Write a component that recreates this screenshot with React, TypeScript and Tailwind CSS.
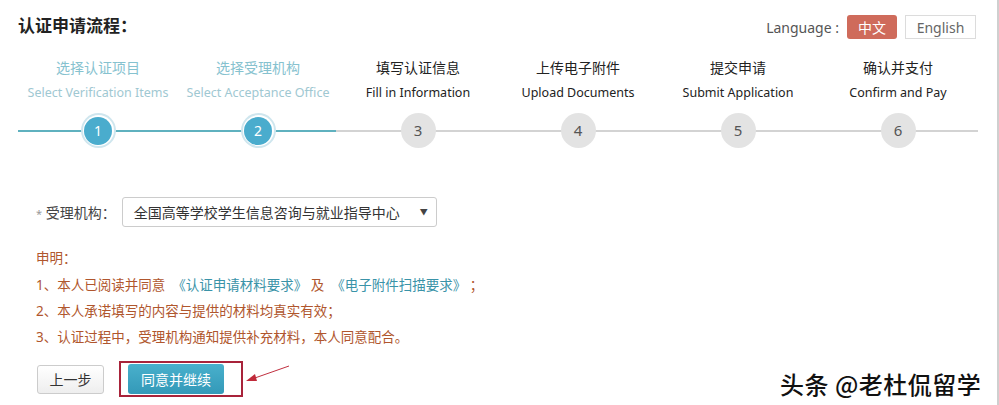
import React from "react";

const steps = [
  { cn: "选择认证项目", en: "Select Verification Items", active: true },
  { cn: "选择受理机构", en: "Select Acceptance Office", active: true },
  { cn: "填写认证信息", en: "Fill in Information", active: false },
  { cn: "上传电子附件", en: "Upload Documents", active: false },
  { cn: "提交申请", en: "Submit Application", active: false },
  { cn: "确认并支付", en: "Confirm and Pay", active: false },
];

const font = { fontFamily: '"Noto Sans", "Noto Sans CJK SC", sans-serif' };

export default function App() {
  return (
    <div className="relative w-[999px] h-[405px] overflow-hidden bg-white text-[#333] border-r-2 border-[#cfcfcf]" style={font}>
      {/* header */}
      <div className="flex items-center justify-between pl-[18px] pr-[21px] pt-[13px]">
        <div className="text-[17px] font-bold text-[#222] leading-[24px]">认证申请流程：</div>
        <div className="flex items-center pt-[2px]">
          <span className="text-[14px] text-[#555] mr-[8px]">Language :</span>
          <span className="w-[50px] h-[24px] rounded-[3px] bg-[#cf6b5b] text-white text-[14px] flex items-center justify-center">中文</span>
          <span className="ml-[8px] w-[71px] h-[24px] border border-[#dcdcdc] text-[14px] text-[#666] flex items-center justify-center">English</span>
        </div>
      </div>

      {/* steps */}
      <div className="relative mx-[18px] mt-[20px] w-[960px]">
        <div className="grid grid-cols-6">
          {steps.map((s, i) => (
            <div key={i} className="flex flex-col items-center">
              <div className={`text-[14px] leading-[18px] ${s.active ? "text-[#86c2cf]" : "text-[#222]"}`}>{s.cn}</div>
              <div className={`mt-[7px] text-[12.5px] leading-[18px] whitespace-nowrap ${s.active ? "text-[#9fc8d2]" : "text-[#222]"}`}>{s.en}</div>
              <div className="mt-[11px] relative z-10">
                {s.active ? (
                  <div className="w-[35px] h-[35px] rounded-full bg-[#cfe6ee] flex items-center justify-center">
                    <div className="w-[31px] h-[31px] rounded-full bg-white flex items-center justify-center">
                      <div className="w-[28px] h-[28px] rounded-full bg-[#4aaccd] text-white text-[14px] flex items-center justify-center">{i + 1}</div>
                    </div>
                  </div>
                ) : (
                  <div className="w-[35px] h-[35px] rounded-full bg-[#e3e3e3] text-[#555] text-[15px] flex items-center justify-center">{i + 1}</div>
                )}
              </div>
            </div>
          ))}
        </div>
        <div className="absolute left-0 right-0 top-[71px] h-[2px] bg-[#d3d3d3]" />
        <div className="absolute left-0 w-[318px] top-[71px] h-[2px] bg-[#5fb1bf]" />
      </div>

      {/* form row */}
      <div className="flex items-center pl-[36px] mt-[49px]">
        <span className="text-[14px] text-[#444]"><span className="text-[#999] text-[11px]">*</span> 受理机构：</span>
        <div className="ml-[6px] w-[315px] h-[30px] border border-[#ccc] rounded-[3px] flex items-center justify-between pl-[11px] pr-[8px] text-[14px] text-[#333]">
          <span>全国高等学校学生信息咨询与就业指导中心</span>
          <span className="text-[8px] text-[#444]">▼</span>
        </div>
      </div>

      {/* statement */}
      <div className="pl-[36px] mt-[18px] text-[13.5px] text-[#b0562d] leading-[26px]">
        <div>申明：</div>
        <div className="mt-[1px] whitespace-pre">1、本人已阅读并同意  <span className="text-[#3a93a8]">《认证申请材料要求》</span> 及  <span className="text-[#3a93a8]">《电子附件扫描要求》</span> ；</div>
        <div>2、本人承诺填写的内容与提供的材料均真实有效；</div>
        <div>3、认证过程中，受理机构通知提供补充材料，本人同意配合。</div>
      </div>

      {/* buttons */}
      <div className="flex items-center pl-[37px] mt-[11px]">
        <button className="w-[67px] h-[29px] border border-[#ccc] rounded-[3px] bg-gradient-to-b from-white to-[#eeeeee] text-[14px] text-[#333]">上一步</button>
        <div className="ml-[15px] w-[124px] h-[36px] border-2 border-[#a8233a] flex items-center pl-[7px]">
          <button className="w-[96px] h-[30px] rounded-[3px] bg-gradient-to-b from-[#49b0cc] to-[#3399b8] text-white text-[14px]">同意并继续</button>
        </div>
        <svg width="50" height="24" viewBox="0 0 50 24" className="ml-[1px] -mt-[8px]">
          <line x1="45" y1="3" x2="8" y2="16" stroke="#c03040" strokeWidth="1" />
          <polygon points="2,18 11,11 13,18" fill="#c02a3a" />
        </svg>
      </div>

      {/* watermark */}
      <div
        className="absolute left-[780px] top-[366px] text-[24px] font-medium text-[#111] tracking-[0.5px]"
        style={{ fontFamily: '"Noto Sans CJK SC", sans-serif', textShadow: "1px 1px 0 #fff, -1px -1px 0 #fff, 1px -1px 0 #fff, -1px 1px 0 #fff" }}
      >
        头条 @老杜侃留学
      </div>
    </div>
  );
}
